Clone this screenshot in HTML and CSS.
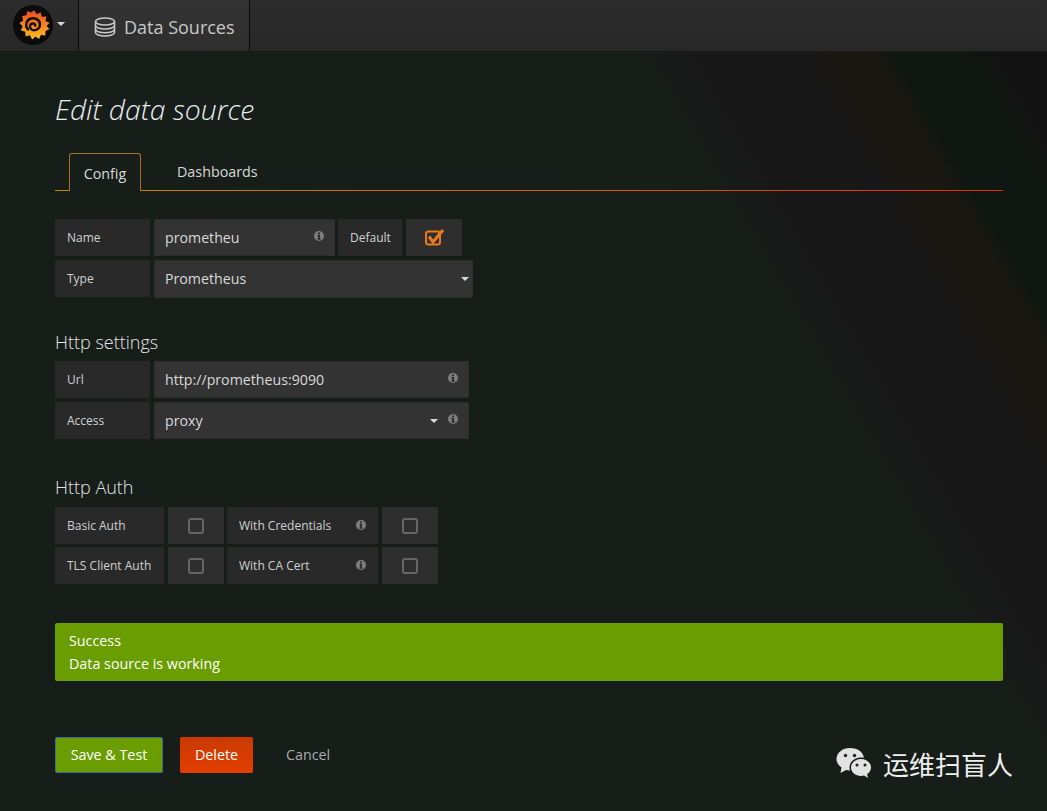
FILE: index.html
```html
<!DOCTYPE html>
<html lang="en">
<head>
<meta charset="utf-8">
<title>Edit data source</title>
<link rel="stylesheet" href="styles.css">
</head>
<body>
<header class="navbar">
  <div class="nav-logo">
    <svg class="logo" width="40" height="40" viewBox="0 0 40 40">
      <defs>
        <linearGradient id="sun" x1="0" y1="0" x2="0" y2="1">
          <stop offset="0" stop-color="#ec4a2a"/>
          <stop offset=".55" stop-color="#f58a20"/>
          <stop offset="1" stop-color="#fcc21e"/>
        </linearGradient>
      </defs>
      <circle cx="20" cy="20" r="20" fill="#0b0b0b"/>
      <g transform="translate(3.400 3.400) scale(.84)">
        <path fill="url(#sun)" d="M21 2l3 5 5-2.500 1.200 5.500 5.500-.5-1 5.500 4.800 2-3.500 4 3.500 3.500-4.800 2.500-.3 5.500-5.200-1-2.200 5-4.300-3-4 3.500-2.500-5-5.200 1.200-.5-5.500-5.300-1.700 2.300-4.700-4-4 4.600-3-1.400-5.300 5.300-.7 1-5.300 5 1.800z"/>
      </g>
      <path fill="none" stroke="#1a0f06" stroke-width="2.400" stroke-linecap="round" d="M15 24.500c-3.200-3.500-2-9.500 3-11 5.500-1.500 10 3 8.800 7.500-1 4-6.300 5.500-8.800 3-1.900-2-1-5.500 1.800-5.500 1.500 0 2.500 1 2.500 2.300"/>
    </svg>
    <span class="caret nav-caret"></span>
  </div>
  <div class="nav-section">
    <svg class="db-icon" width="22" height="20" viewBox="0 0 22 20" fill="none" stroke="#c8c8c8" stroke-width="1.600">
      <ellipse cx="11" cy="4.500" rx="9.500" ry="3.500"/>
      <path d="M1.500 4.500v11c0 2 4.300 3.500 9.500 3.500s9.500-1.500 9.500-3.500v-11"/>
      <path d="M1.500 8.500c0 2 4.300 3.500 9.500 3.500s9.500-1.500 9.500-3.500"/>
      <path d="M1.500 12.200c0 2 4.300 3.500 9.500 3.500s9.500-1.500 9.500-3.500"/>
    </svg>
    <span class="nav-title">Data Sources</span>
  </div>
</header>

<main class="page">
  <h1 class="page-title">Edit data source</h1>

  <nav class="tabs">
    <span class="tab tab-active">Config</span>
    <span class="tab">Dashboards</span>
  </nav>

  <section class="form-block">
    <div class="row">
      <span class="cell label w-label">Name</span>
      <span class="cell input w-name">prometheu<svg class="info" viewBox="0 0 10 10"><use href="#info"/></svg></span>
      <span class="cell label w-default">Default</span>
      <span class="cell check w-check">
        <svg class="checkbox" width="20" height="20" viewBox="0 0 20 20" fill="none">
          <rect x="2" y="3.500" width="14" height="13" rx="2.500" stroke="#eb7b18" stroke-width="2"/>
          <path d="M5 8.500l4 5.500 10-12" stroke="#eb7b18" stroke-width="3"/>
        </svg>
      </span>
    </div>
    <div class="row">
      <span class="cell label w-label">Type</span>
      <span class="cell input w-type">Prometheus<span class="caret select-caret"></span></span>
    </div>
  </section>

  <h2 class="section-title first-section">Http settings</h2>
  <section>
    <div class="row">
      <span class="cell label w-label">Url</span>
      <span class="cell input w-url">http://prometheus:9090<svg class="info" viewBox="0 0 10 10"><use href="#info"/></svg></span>
    </div>
    <div class="row">
      <span class="cell label w-label">Access</span>
      <span class="cell input w-url">proxy<span class="caret access-caret"></span><svg class="info" viewBox="0 0 10 10"><use href="#info"/></svg></span>
    </div>
  </section>

  <h2 class="section-title">Http Auth</h2>
  <section>
    <div class="row row-tight">
      <span class="cell label w-auth">Basic Auth</span>
      <span class="cell check w-check"><span class="box"></span></span>
      <span class="cell label w-cred">With Credentials<svg class="info" viewBox="0 0 10 10"><use href="#info"/></svg></span>
      <span class="cell check w-check"><span class="box"></span></span>
    </div>
    <div class="row row-tight">
      <span class="cell label w-auth">TLS Client Auth</span>
      <span class="cell check w-check"><span class="box"></span></span>
      <span class="cell label w-cred">With CA Cert<svg class="info" viewBox="0 0 10 10"><use href="#info"/></svg></span>
      <span class="cell check w-check"><span class="box"></span></span>
    </div>
  </section>

  <div class="alert">
    <div class="alert-title">Success</div>
    <div>Data source is working</div>
  </div>

  <div class="actions">
    <button class="btn btn-save">Save &amp; Test</button>
    <button class="btn btn-delete">Delete</button>
    <span class="cancel">Cancel</span>
  </div>
</main>

<aside class="watermark">
  <svg width="36" height="34" viewBox="0 0 36 34">
    <path fill="#e2e2e2" d="M14 1C6.500 1 .5 5.800.5 12c0 3.500 2 6.500 5 8.500L4.500 26l5.500-3c1.200.3 2.500.5 4 .5 8 0 14-5 14-11.500S22 1 14 1z"/>
    <path fill="#171d19" d="M25 10.500c-6 0-11.500 4-11.500 10 0 6 5.500 10 11.500 10 1 0 2-.1 3-.4l5 3-1-4.800c2.700-2 4.500-4.800 4.500-7.800 0-6-5.500-10-11.500-10z"/>
    <path fill="#e2e2e2" d="M25 12c-5.500 0-10 3.700-10 8.500S19.500 29 25 29c1.100 0 2.100-.2 3-.4l4 2.400-.9-3.800c2.400-1.600 3.900-4 3.900-6.700 0-4.800-4.500-8.500-10-8.500z"/>
    <circle cx="9.500" cy="8.500" r="1.700" fill="#222"/>
    <circle cx="18.500" cy="8.500" r="1.700" fill="#222"/>
    <circle cx="21" cy="18" r="1.500" fill="#222"/>
    <circle cx="29" cy="18" r="1.500" fill="#222"/>
  </svg>
  <span class="watermark-text">运维扫盲人</span>
</aside>

<svg class="defs" width="0" height="0">
  <symbol id="info" viewBox="0 0 10 10">
    <circle cx="5" cy="5" r="5" fill="#7d7d7d"/>
    <path fill="#2b2b2b" d="M4 1.500h2v1.700H4zM3.500 4h2.500v3.500h.7v1.200H3.500V7.500h.7V5.200h-.7z"/>
  </symbol>
</svg>
</body>
</html>
```

FILE: styles.css
```css
* { box-sizing: border-box; }

html, body {
  margin: 0;
  height: 100%;
}

body {
  position: relative;
  width: 1047px;
  height: 811px;
  overflow: hidden;
  font-family: "Open Sans", "Noto Sans", sans-serif;
  color: #d8d9da;
  background: #171d19;
}

.navbar {
  display: flex;
  height: 52px;
  background: linear-gradient(#2c2c2c, #282828);
  border-bottom: 1px solid #191919;
}

.nav-logo {
  display: flex;
  align-items: center;
  width: 79px;
  padding: 0 0 1px 13px;
  border-right: 1px solid #0b0b0b;
}

.logo { flex: none; }

.caret {
  display: block;
  flex: none;
  width: 0;
  height: 0;
  border-left: 4px solid transparent;
  border-right: 4px solid transparent;
  border-top: 4px solid #d8d9da;
}

.nav-caret { margin-left: 4px; margin-bottom: 3px; }

.nav-section {
  display: flex;
  align-items: center;
  width: 171px;
  padding: 2px 0 0 15px;
  background: linear-gradient(#333, #2e2e2e);
  border-right: 1px solid #0b0b0b;
}

.nav-title {
  margin-left: 8px;
  font-size: 18px;
  color: #c8c8c8;
}

.page {
  height: 759px;
  padding: 39px 44px 0 55px;
  background: linear-gradient(60deg,
    #171d19 0, #171d19 925px,
    #181818 980px, #181818 1075px,
    #1a1713 1098px, #1a1713 1135px,
    #101611 1152px, #101611 1215px,
    #121212 1240px, #121212 100%);
}

.page-title {
  margin: 0;
  font-size: 28.300px;
  font-weight: 300;
  font-style: italic;
  line-height: 36px;
  color: #e9edf2;
}

.tabs {
  display: flex;
  height: 38px;
  margin-top: 26px;
  padding-left: 14px;
  background: linear-gradient(90deg, #c48a00, #d05a00 60%, #dc3010) bottom / 100% 1px no-repeat;
}

.tab {
  padding: 9px 15px 0;
  margin-right: 21px;
  height: 37px;
  font-size: 14.300px;
  color: #d8d9da;
}

.tab-active {
  width: 72px;
  height: 38px;
  padding: 10px 0 0;
  text-align: center;
  background: #171d19;
  border: 1px solid #a8701f;
  border-bottom: 0;
  border-radius: 3px 3px 0 0;
}

.form-block { margin-top: 28px; }

.row {
  display: flex;
  gap: 4px;
  height: 37px;
  margin-bottom: 4px;
}

.row-tight { margin-bottom: 3px; }

.cell {
  display: flex;
  align-items: center;
  height: 37px;
  padding: 0 12px;
  font-size: 12px;
  white-space: nowrap;
  border-radius: 1px;
}

.label {
  background: #292929;
  color: #d0d1d2;
}

.input {
  background: #333;
  border: 1px solid #2e2e2e;
  padding: 0 10px;
  font-size: 14.200px;
  color: #d8d9da;
}

.check {
  justify-content: center;
  background: #2e2e2e;
  padding: 0;
}

.w-label { width: 95px; }
.w-name { width: 181px; }
.w-default { width: 64px; margin-left: -1px; }
.w-check { width: 56px; }
.w-type { width: 319px; height: 38px; padding-bottom: 2px; }
.w-url { width: 315px; }
.w-auth { width: 109px; }
.w-cred { width: 151px; margin-left: -1px; }

.info {
  flex: none;
  width: 10px;
  height: 10px;
  margin-left: auto;
  margin-bottom: 3px;
}

.w-cred .info { margin-bottom: 1px; }

.select-caret { margin-left: auto; margin-right: -7px; margin-top: 2px; }
.access-caret { margin-left: auto; margin-right: 10px; }
.access-caret + .info { margin-left: 0; }

.box {
  width: 16px;
  height: 16px;
  border: 2px solid #666;
  border-radius: 3px;
}

.section-title {
  margin: 0;
  height: 24px;
  font-size: 18px;
  font-weight: 300;
  line-height: 22px;
  color: #e3e4e5;
}

.first-section { margin-top: 34px; margin-bottom: 6px; }
.section-title:not(.first-section) { margin-top: 37px; margin-bottom: 7px; }

.alert {
  height: 58px;
  margin-top: 39px;
  padding: 6px 14px;
  background: #6a9d00;
  border-radius: 2px;
  font-size: 14.300px;
  line-height: 23px;
  color: #fff;
}

.actions {
  display: flex;
  align-items: center;
  margin-top: 56px;
}

.btn {
  height: 36px;
  padding: 0 0 2px;
  border: 0;
  border-radius: 2px;
  font-family: inherit;
  font-size: 14.300px;
  color: #fff;
}

.btn-save {
  width: 108px;
  background: #6a9d00;
  border: 1px solid #3f6a9a;
}

.btn-delete {
  width: 73px;
  margin-left: 17px;
  background: linear-gradient(#c83a00, #e53e00);
}

.cancel {
  margin: 0 0 2px 33px;
  font-size: 14.300px;
  color: #aaa;
}

.watermark {
  position: absolute;
  left: 836px;
  top: 745px;
  display: flex;
  align-items: center;
  gap: 11px;
}

.watermark-text {
  font-family: "Noto Sans CJK SC", sans-serif;
  font-size: 26px;
  line-height: 38px;
  color: #eee;
}

.defs { position: absolute; }
```
